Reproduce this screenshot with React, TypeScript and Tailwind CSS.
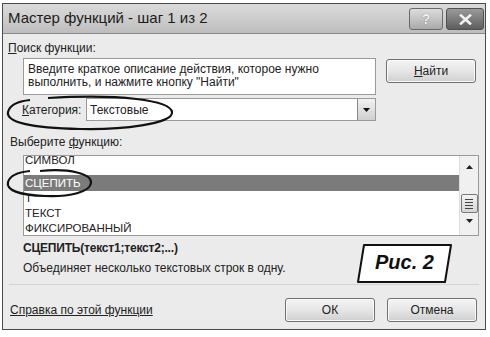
import React from "react";

const font = { fontFamily: '"Liberation Sans", Arial, sans-serif' };

function Btn({ children, className = "" }: { children: React.ReactNode; className?: string }) {
  return (
    <div
      className={
        "flex items-center justify-center rounded-[3px] border border-[#707070] bg-gradient-to-b from-[#f4f4f4] via-[#e6e6e6] to-[#cfcfcf] text-[12px] text-[#222] shadow-[inset_0_0_0_1px_#fafafa] " +
        className
      }
    >
      {children}
    </div>
  );
}

export default function App() {
  return (
    <div className="relative h-[337px] w-[490px] overflow-hidden bg-white" style={font}>
      <div className="ml-[2px] mt-[3px] flex h-[327px] w-[484px] flex-col border border-[#4a4a4a] bg-[#ebebeb]">
        {/* title bar */}
        <div className="flex h-[29px] items-center justify-between bg-gradient-to-b from-[#dadada] via-[#cdcdcd] to-[#bdbdbd] pl-[5px] pr-[1px]">
          <span className="text-[15px] text-[#1c1c1c]">Мастер функций - шаг 1 из 2</span>
          <div className="flex gap-[3px] self-start pt-[4px]">
            <div className="flex h-[22px] w-[34px] items-center justify-center rounded-[3px] border border-[#6a6a6a] bg-gradient-to-b from-[#dcdcdc] via-[#c4c4c4] to-[#a9a9a9] text-[14px] font-bold text-[#f4f4f4] [text-shadow:0_0_1px_#555]">
              ?
            </div>
            <div className="flex h-[22px] w-[38px] items-center justify-center rounded-[3px] border border-[#505050] bg-gradient-to-b from-[#9a9a9a] via-[#7c7c7c] to-[#5e5e5e]">
              <svg width="13" height="11" viewBox="0 0 13 11">
                <path d="M2 1.5 L11 9.5 M11 1.5 L2 9.5" stroke="#f2f2f2" strokeWidth="2.6" strokeLinecap="square" />
              </svg>
            </div>
          </div>
        </div>
        <div className="border-t border-[#8a8a8a]" />

        {/* body */}
        <div className="flex flex-1 flex-col pl-[5px] pr-[6px] text-[12px] text-[#222]">
          <div className="mt-[7px] leading-[14px]">
            <span className="underline">П</span>оиск функции:
          </div>
          <div className="mt-[3px] flex items-start">
            <div className="ml-[15px] h-[37px] w-[353px] border border-[#9a9a9a] bg-white px-[4px] pt-[4px] text-[12px] leading-[13px]">
              Введите краткое описание действия, которое нужно
              <br />
              выполнить, и нажмите кнопку "Найти"
            </div>
            <Btn className="ml-[10px] mt-[1px] h-[24px] w-[90px]">
              <span>
                <span className="underline">Н</span>айти
              </span>
            </Btn>
          </div>
          <div className="mt-[3px] flex items-center">
            <span className="ml-[14px] w-[64px]">
              <span className="underline">К</span>атегория:
            </span>
            <div className="flex h-[23px] w-[290px] items-center border border-[#9a9a9a] bg-white">
              <span className="flex-1 pl-[3px]">Текстовые</span>
              <div className="flex h-[21px] w-[18px] items-center justify-center border-l border-[#8a8a8a] bg-gradient-to-b from-[#f2f2f2] to-[#cfcfcf]">
                <svg width="7" height="4" viewBox="0 0 7 4">
                  <path d="M0 0 H7 L3.5 4 Z" fill="#111" />
                </svg>
              </div>
            </div>
          </div>
          <div className="mt-[14px] ml-[2px] leading-[14px]">
            Выберите <span className="underline">ф</span>ункцию:
          </div>
          <div className="ml-[15px] mt-[6px] flex h-[81px] w-[456px] border border-[#9a9a9a] bg-white">
            <div className="relative flex-1 overflow-hidden text-[11.5px]">
              <div className="-mt-[4px] pl-[1px] leading-[16px]">СИМВОЛ</div>
              <div className="mt-[7px] h-[16px] bg-[#7b7b7b] pl-[1px] leading-[16px] text-white">СЦЕПИТЬ</div>
              <div className="pl-[1px] leading-[15px]">Т</div>
              <div className="pl-[1px] leading-[15px]">ТЕКСТ</div>
              <div className="pl-[1px] leading-[15px]">ФИКСИРОВАННЫЙ</div>
            </div>
            <div className="flex w-[19px] flex-col items-center border-l border-[#dcdcdc] bg-[#f0f0f0] py-[6px]">
              <svg width="7" height="4" viewBox="0 0 7 4" className="mt-[3px]">
                <path d="M0 4 H7 L3.5 0 Z" fill="#222" />
              </svg>
              <div className="mt-[25px] flex h-[19px] w-[17px] flex-col items-center justify-center gap-[2px] rounded-[2px] border border-[#7a7a7a] bg-gradient-to-b from-[#f4f4f4] to-[#d6d6d6]">
                <div className="h-[1px] w-[8px] bg-[#444]" />
                <div className="h-[1px] w-[8px] bg-[#444]" />
                <div className="h-[1px] w-[8px] bg-[#444]" />
                <div className="h-[1px] w-[8px] bg-[#444]" />
              </div>
              <svg width="7" height="4" viewBox="0 0 7 4" className="mt-[6px]">
                <path d="M0 0 H7 L3.5 4 Z" fill="#222" />
              </svg>
            </div>
          </div>
          <div className="ml-[15px] mt-[5px] text-[12px] font-bold leading-[14px] tracking-[-0.2px]">
            СЦЕПИТЬ(текст1;текст2;...)
          </div>
          <div className="ml-[15px] mt-[6px] leading-[14px]">Объединяет несколько текстовых строк в одну.</div>
          <div className="ml-[1px] mt-[9px] h-[1px] w-[470px] bg-[#d2d2d2]" />
          <div className="mt-[13px] flex items-center">
            <span className="ml-[2px] flex-1 underline">Справка по этой функции</span>
            <Btn className="h-[24px] w-[90px]">ОК</Btn>
            <Btn className="ml-[12px] mr-[2px] h-[24px] w-[90px]">Отмена</Btn>
          </div>
        </div>
      </div>

      {/* annotations */}
      <svg className="pointer-events-none absolute left-0 top-0" width="490" height="337">
        <path
          d="M48 98 C 120 94, 170 100, 172 112 C 174 124, 120 130, 80 129 C 30 128, 6 122, 8 112 C 10 104, 20 101, 30 100"
          fill="none"
          stroke="#111"
          strokeWidth="2.2"
        />
        <path
          d="M40 171 C 70 168, 92 174, 91 183 C 90 192, 70 197, 45 196 C 18 195, 6 190, 8 182 C 10 175, 20 172, 30 171"
          fill="none"
          stroke="#111"
          strokeWidth="2.2"
        />
        <path d="M364 245 L451 245 L445 282 L358 282 Z" fill="#fff" stroke="#111" strokeWidth="2" strokeLinejoin="round" />
      </svg>
      <div className="absolute left-[358px] top-[250px] flex w-[93px] justify-center text-[20px] font-bold italic leading-[24px] text-[#111]">
        Рис. 2
      </div>
    </div>
  );
}
